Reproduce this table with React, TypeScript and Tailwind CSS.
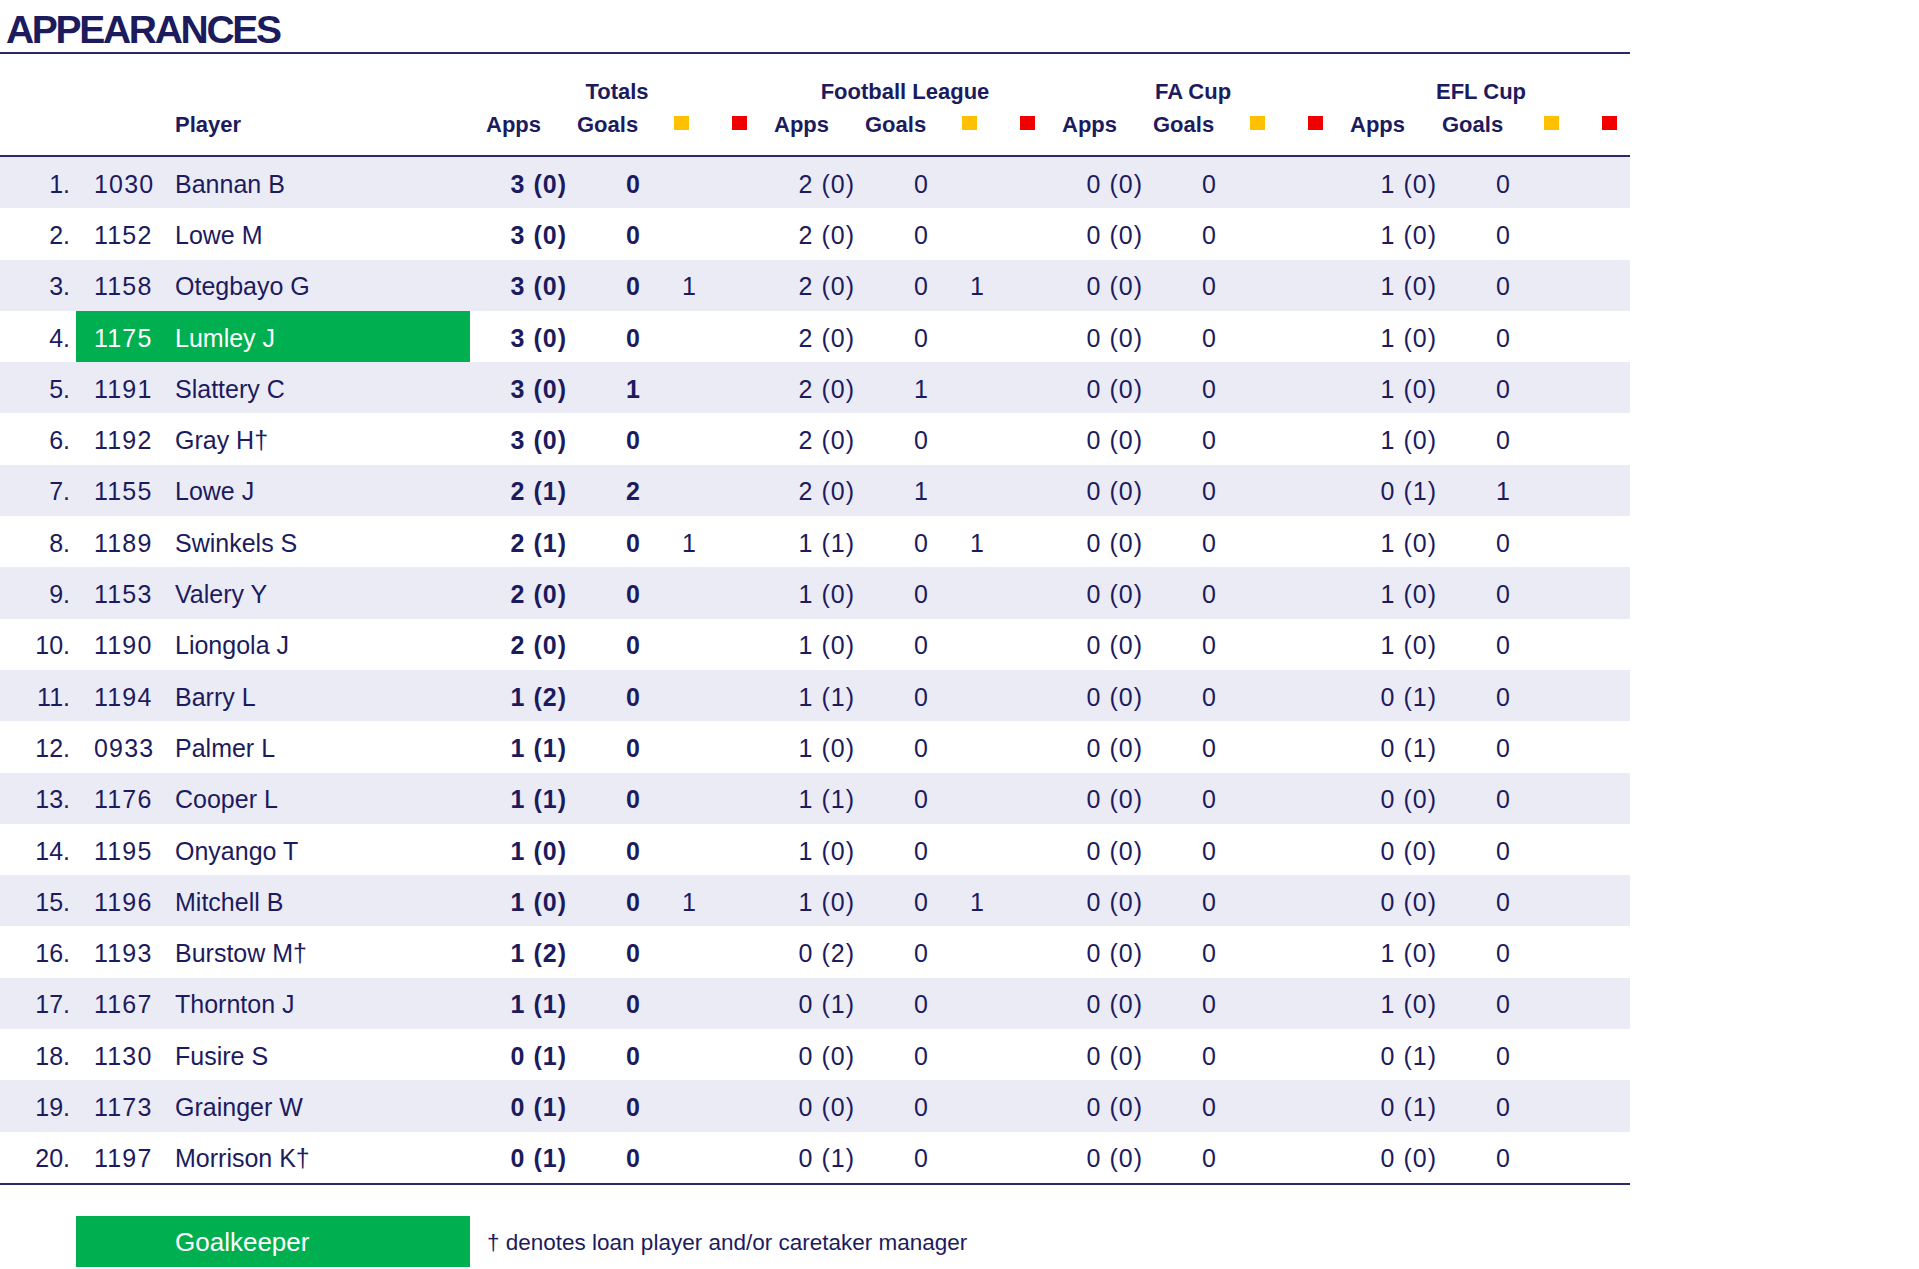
type Group = { apps: string; goals: string; yellow?: string; red?: string };

type Row = {
  no: number;
  id: string;
  name: string;
  gk?: boolean;
  totals: Group;
  league: Group;
  fa: Group;
  efl: Group;
};

const g = (apps: string, goals: string, yellow?: string): Group => ({ apps, goals, yellow });

const rows: Row[] = [
  { no: 1, id: "1030", name: "Bannan B", totals: g("3 (0)", "0"), league: g("2 (0)", "0"), fa: g("0 (0)", "0"), efl: g("1 (0)", "0") },
  { no: 2, id: "1152", name: "Lowe M", totals: g("3 (0)", "0"), league: g("2 (0)", "0"), fa: g("0 (0)", "0"), efl: g("1 (0)", "0") },
  { no: 3, id: "1158", name: "Otegbayo G", totals: g("3 (0)", "0", "1"), league: g("2 (0)", "0", "1"), fa: g("0 (0)", "0"), efl: g("1 (0)", "0") },
  { no: 4, id: "1175", name: "Lumley J", gk: true, totals: g("3 (0)", "0"), league: g("2 (0)", "0"), fa: g("0 (0)", "0"), efl: g("1 (0)", "0") },
  { no: 5, id: "1191", name: "Slattery C", totals: g("3 (0)", "1"), league: g("2 (0)", "1"), fa: g("0 (0)", "0"), efl: g("1 (0)", "0") },
  { no: 6, id: "1192", name: "Gray H†", totals: g("3 (0)", "0"), league: g("2 (0)", "0"), fa: g("0 (0)", "0"), efl: g("1 (0)", "0") },
  { no: 7, id: "1155", name: "Lowe J", totals: g("2 (1)", "2"), league: g("2 (0)", "1"), fa: g("0 (0)", "0"), efl: g("0 (1)", "1") },
  { no: 8, id: "1189", name: "Swinkels S", totals: g("2 (1)", "0", "1"), league: g("1 (1)", "0", "1"), fa: g("0 (0)", "0"), efl: g("1 (0)", "0") },
  { no: 9, id: "1153", name: "Valery Y", totals: g("2 (0)", "0"), league: g("1 (0)", "0"), fa: g("0 (0)", "0"), efl: g("1 (0)", "0") },
  { no: 10, id: "1190", name: "Liongola J", totals: g("2 (0)", "0"), league: g("1 (0)", "0"), fa: g("0 (0)", "0"), efl: g("1 (0)", "0") },
  { no: 11, id: "1194", name: "Barry L", totals: g("1 (2)", "0"), league: g("1 (1)", "0"), fa: g("0 (0)", "0"), efl: g("0 (1)", "0") },
  { no: 12, id: "0933", name: "Palmer L", totals: g("1 (1)", "0"), league: g("1 (0)", "0"), fa: g("0 (0)", "0"), efl: g("0 (1)", "0") },
  { no: 13, id: "1176", name: "Cooper L", totals: g("1 (1)", "0"), league: g("1 (1)", "0"), fa: g("0 (0)", "0"), efl: g("0 (0)", "0") },
  { no: 14, id: "1195", name: "Onyango T", totals: g("1 (0)", "0"), league: g("1 (0)", "0"), fa: g("0 (0)", "0"), efl: g("0 (0)", "0") },
  { no: 15, id: "1196", name: "Mitchell B", totals: g("1 (0)", "0", "1"), league: g("1 (0)", "0", "1"), fa: g("0 (0)", "0"), efl: g("0 (0)", "0") },
  { no: 16, id: "1193", name: "Burstow M†", totals: g("1 (2)", "0"), league: g("0 (2)", "0"), fa: g("0 (0)", "0"), efl: g("1 (0)", "0") },
  { no: 17, id: "1167", name: "Thornton J", totals: g("1 (1)", "0"), league: g("0 (1)", "0"), fa: g("0 (0)", "0"), efl: g("1 (0)", "0") },
  { no: 18, id: "1130", name: "Fusire S", totals: g("0 (1)", "0"), league: g("0 (0)", "0"), fa: g("0 (0)", "0"), efl: g("0 (1)", "0") },
  { no: 19, id: "1173", name: "Grainger W", totals: g("0 (1)", "0"), league: g("0 (0)", "0"), fa: g("0 (0)", "0"), efl: g("0 (1)", "0") },
  { no: 20, id: "1197", name: "Morrison K†", totals: g("0 (1)", "0"), league: g("0 (1)", "0"), fa: g("0 (0)", "0"), efl: g("0 (0)", "0") },
];

// index | id | player | totals | league | fa cup | efl cup (slightly wider apps column) | gutter
const GRID =
  "grid grid-cols-[76px_99px_295px_repeat(3,100px_80px_65px_43px)_106px_80px_65px_37px_8px]";

function GroupCells({ data, bold }: { data: Group; bold?: boolean }) {
  return (
    <>
      <div className={`pr-[3px] text-right tracking-[1px] ${bold ? "font-bold" : ""}`}>{data.apps}</div>
      <div className={`pr-[9px] text-right tracking-[1px] ${bold ? "font-bold" : ""}`}>{data.goals}</div>
      <div className="pr-[19px] text-right">{data.yellow ?? ""}</div>
      <div className="text-right">{data.red ?? ""}</div>
    </>
  );
}

function SubHeader({ goalsPad = "pl-[7px]" }: { goalsPad?: string }) {
  return (
    <>
      <div className="pl-[16px]">Apps</div>
      <div className={goalsPad}>Goals</div>
      <div className="flex items-center pl-[24px]">
        <span className="mb-[5px] h-[14px] w-[15px] bg-[#ffc000]" />
      </div>
      <div className="flex items-center pl-[17px]">
        <span className="mb-[5px] h-[14px] w-[15px] bg-[#f20000]" />
      </div>
    </>
  );
}

export default function App() {
  return (
    <div className="min-h-[1269px] w-[1919px] overflow-hidden bg-white font-['Liberation_Sans',Arial,sans-serif] text-[#1c1b5e]">
      <div className="w-[1630px]">
        <h1 className="h-[54px] border-b-2 border-[#2a2966] pl-[6px] pt-[10px] text-[39px] font-bold leading-[39px] tracking-[-2.3px]">
          APPEARANCES
        </h1>

        <div className="border-b-2 border-[#2a2966] pb-[19px] pt-[27px] text-[22px] font-bold leading-[22px]">
          <div className={GRID}>
            <div className="col-span-3" />
            {["Totals", "Football League", "FA Cup", "EFL Cup"].map((t) => (
              <div key={t} className="col-span-4 flex justify-center pl-[6px]">
                {t}
              </div>
            ))}
          </div>
          <div className={`${GRID} mt-[11px]`}>
            <div />
            <div />
            <div>Player</div>
            <SubHeader />
            <SubHeader />
            <SubHeader />
            <SubHeader goalsPad="pl-[2px]" />
          </div>
        </div>

        <div className="border-b-2 border-[#2a2966] text-[25px] leading-[25px]">
          {rows.map((r, i) => (
            <div
              key={r.no}
              className={`${GRID} h-[51.3px] items-stretch ${i % 2 === 0 ? "bg-[#ebebf6]" : "bg-white"}`}
            >
              <div className="flex items-center justify-end pr-[6px] pt-[3px]">{r.no}.</div>
              <div className={`flex items-center pl-[18px] pt-[3px] tracking-[1.2px] ${r.gk ? "bg-[#00b050] text-white" : ""}`}>
                {r.id}
              </div>
              <div className={`flex items-center pt-[3px] ${r.gk ? "bg-[#00b050] text-white" : ""}`}>{r.name}</div>
              <div className="col-span-16 grid grid-cols-subgrid items-center pt-[3px]">
                <GroupCells data={r.totals} bold />
                <GroupCells data={r.league} />
                <GroupCells data={r.fa} />
                <GroupCells data={r.efl} />
              </div>
            </div>
          ))}
        </div>

        <div className={`${GRID} mt-[31px]`}>
          <div />
          <div className="col-span-2 flex h-[51px] items-center bg-[#00b050] pl-[99px] pt-[2px] text-[26px] text-white">
            Goalkeeper
          </div>
          <div className="col-span-16 flex items-center pl-[17px] pt-[2px] text-[22.5px]">
            † denotes loan player and/or caretaker manager
          </div>
        </div>
      </div>
    </div>
  );
}
